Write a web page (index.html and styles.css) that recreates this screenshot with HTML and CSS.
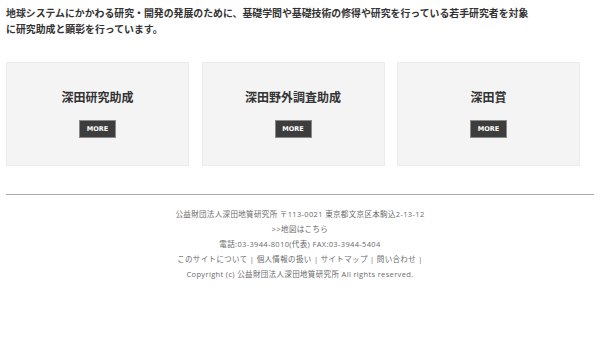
FILE: index.html
```html
<!DOCTYPE html>
<html lang="ja">
<head>
<meta charset="utf-8">
<link rel="stylesheet" href="styles.css">
</head>
<body>
<main class="page">
  <p class="intro">地球システムにかかわる研究・開発の発展のために、基礎学問や基礎技術の修得や研究を行っている若手研究者を対象に研究助成と顕彰を行っています。</p>
  <section class="cards">
    <div class="card"><h2 class="card-title">深田研究助成</h2><a class="more">MORE</a></div>
    <div class="card"><h2 class="card-title">深田野外調査助成</h2><a class="more">MORE</a></div>
    <div class="card"><h2 class="card-title">深田賞</h2><a class="more">MORE</a></div>
  </section>
  <footer class="footer">
    <p>公益財団法人深田地質研究所 〒113-0021 東京都文京区本駒込2-13-12</p>
    <p>&gt;&gt;地図はこちら</p>
    <p>電話:03-3944-8010(代表) FAX:03-3944-5404</p>
    <p>このサイトについて | 個人情報の扱い | サイトマップ | 問い合わせ |</p>
    <p>Copyright (c) 公益財団法人深田地質研究所 All rights reserved.</p>
  </footer>
</main>
</body>
</html>
```
FILE: styles.css
```css
* { box-sizing: border-box; }
html, body { margin: 0; padding: 0; background: #fff; }
body { font-family: "Noto Sans CJK JP", "Noto Sans", sans-serif; color: #333; }
.page { padding: 5px 6px 0 6px; }
.intro {
  margin: 0;
  width: 528px;
  font-size: 9.9px;
  line-height: 16px;
  font-weight: 700;
  color: #333;
}
.cards {
  display: grid;
  grid-template-columns: 183px 183px 183px;
  column-gap: 12.5px;
  margin-top: 25px;
}
.card {
  height: 104px;
  background: #f4f4f4;
  border: 1px solid #ececec;
  display: flex;
  flex-direction: column;
  align-items: center;
  padding-top: 26px;
}
.card-title {
  margin: 0;
  font-size: 12px;
  line-height: 16px;
  font-weight: 700;
  color: #333;
}
.more {
  margin-top: 15px;
  width: 37px;
  height: 18px;
  background: #3d3d3d;
  border: 1px solid #8a8a8a;
  color: #fff;
  font-family: "DejaVu Sans", sans-serif;
  font-size: 6.5px;
  font-weight: 700;
  display: flex;
  align-items: center;
  justify-content: center;
}
.footer {
  margin-top: 28px;
  border-top: 1px solid #aaa;
  width: 588px;
  padding-top: 12px;
  text-align: center;
  color: #6a6a6a;
  font-family: "Open Sans", "Noto Sans CJK JP", sans-serif;
  font-size: 7.5px;
  letter-spacing: 0.35px;
  line-height: 15px;
}
.footer p { margin: 0; }
```
